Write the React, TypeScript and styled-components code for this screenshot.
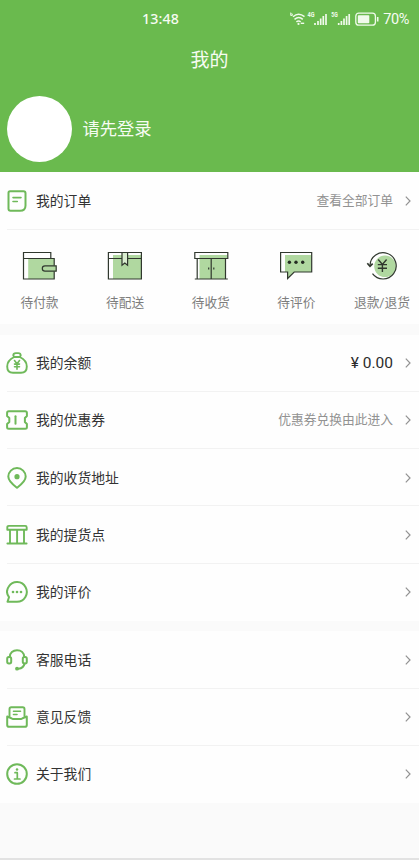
import React from 'react';
import styled, { createGlobalStyle } from 'styled-components';

const GlobalStyle = createGlobalStyle`
  * { box-sizing: border-box; }
  body {
    margin: 0;
    background: #fafafa;
    font-family: Roboto, "Noto Sans CJK SC", sans-serif;
    color: #333;
  }
`;

const GREEN = '#6aba4e';
const ICON_GREEN = '#6fb95a';

const Page = styled.div`
  display: flex;
  flex-direction: column;
  height: 860px;
  overflow: hidden;
  background: #fafafa;
`;

const Header = styled.header`
  flex: none;
  height: 172.4px;
  background: ${GREEN};
  color: #f6fcf2;
`;

const StatusBar = styled.div`
  display: flex;
  align-items: center;
  height: 38px;
  padding: 0 10px 0 142px;
`;

const Time = styled.span`
  margin-right: auto;
  font-family: "Noto Sans", sans-serif;
  font-size: 14.2px;
  font-weight: 500;
  line-height: 18px;
  letter-spacing: 0.15px;
`;

const Battery = styled.span`
  margin-left: 3px;
  padding-top: 1px;
  font-family: Roboto, sans-serif;
  font-size: 14.5px;
  line-height: 18px;
  letter-spacing: -0.4px;
`;

const Title = styled.h1`
  margin: 0;
  padding-top: 2px;
  height: 42px;
  line-height: 42px;
  text-align: center;
  font-size: 19px;
  font-weight: 400;
`;

const Profile = styled.div`
  display: flex;
  align-items: center;
  gap: 10.5px;
  margin-top: 16px;
  padding-left: 7px;
  font-size: 17.3px;
`;

const ProfileName = styled.span`
  padding-bottom: 3px;
`;

const Avatar = styled.div`
  width: 65px;
  height: 66px;
  border-radius: 50%;
  background: #fff;
`;

const Section = styled.section`
  flex: none;
  margin-bottom: 10.2px;
  background: #fefefe;
`;

const Row = styled.div<{ $divided: boolean }>`
  display: flex;
  align-items: center;
  height: 57.3px;
  margin-left: 7px;
  padding: 0.8px 8px 0 0;
  border-bottom: 1px solid ${p => (p.$divided ? '#f2f2f2' : 'transparent')};
`;

const RowIcon = styled.svg`
  flex: none;
  width: 22px;
  height: 22px;
  margin-left: -1px;
  fill: none;
  stroke: ${ICON_GREEN};
  stroke-width: 2;
  stroke-linecap: round;
  stroke-linejoin: round;
`;

const RowLabel = styled.span`
  margin-left: 8px;
  margin-right: auto;
  font-size: 13.8px;
  line-height: 20px;
`;

const RowValue = styled.span<{ $strong?: boolean }>`
  margin-right: 12px;
  font-size: ${p => (p.$strong ? '15.5px' : '12.75px')};
  color: ${p => (p.$strong ? '#2c2c2c' : '#929292')};
  line-height: 20px;
`;

const Chevron = styled.svg`
  flex: none;
  width: 6px;
  height: 10px;
  fill: none;
  stroke: #929292;
  stroke-width: 1.2;
`;

const Orders = styled.div`
  display: flex;
  justify-content: space-between;
  height: 94.7px;
  padding: 21px 9px 0 11.5px;
`;

const Order = styled.div`
  display: flex;
  flex-direction: column;
  align-items: center;
  width: 56px;
  gap: 12.2px;
  font-size: 12.7px;
  line-height: 19px;
  color: #7d7d7d;
  white-space: nowrap;
`;

const OrderIcon = styled.svg`
  width: 36px;
  height: 30px;
  fill: none;
  stroke: #30382e;
  stroke-width: 1.2;
`;

const Tint = styled.g`
  fill: #b0d8a0;
  stroke: none;
`;

const BottomLine = styled.div`
  height: 2px;
  margin-top: auto;
  background: #e2e2e2;
`;

const StatusIcons = () => (
  <svg width="91" height="20" viewBox="0 0 91 20" fill="none" stroke="#f0faeb">
    <g strokeWidth="1.5">
      <path d="M4 7.7Q9.5 2.9 15.5 7.7M5.5 10.4Q9.8 6.7 13.8 10.4M7.4 12.9Q9.6 11 11.7 12.9" />
    </g>
    <path d="M1.7 3.5v3h1.6v-1.6H1.7" strokeWidth="0.9" />
    <circle cx="9.5" cy="14.9" r="1.1" fill="#f0faeb" stroke="none" />
    <path d="M11.7 14.3h3.5" strokeWidth="1.4" />
    <g fill="#f0faeb" stroke="none" fontFamily="Roboto, sans-serif" fontSize="6.8" fontWeight="700">
      <text x="18.5" y="8.3" textLength="7" lengthAdjust="spacingAndGlyphs">4G</text>
      <text x="42.3" y="8.3" textLength="6.5" lengthAdjust="spacingAndGlyphs">5G</text>
    </g>
    <path d="M26 16v-2M29 16v-4M31.7 16v-6.5M34.3 16v-9M37 16v-11" strokeWidth="1.7" />
    <path d="M49.7 16v-2M52.4 16v-4M55 16v-6.5M57.6 16v-9M60.2 16v-11" strokeWidth="1.7" />
    <rect x="66.8" y="4.2" width="19.6" height="12" rx="3" strokeWidth="1.3" />
    <rect x="68.8" y="6.2" width="11.5" height="8" rx="0.8" fill="#f0faeb" stroke="none" />
    <path d="M88.7 8v4.5" strokeWidth="1.6" />
  </svg>
);

const orders = [
  {
    label: '待付款',
    art: (
      <>
        <Tint><path d="M6.2 7.5h26V28h-26z" /></Tint>
        <path d="M32.2 14.8V7.5H1.5V28h30.7v-7.8M1.5 7.5v-6h27.3v6" />
        <path d="M34.2 14.8H23a2.7 2.7 0 0 0 0 5.4h11.2z" fill="#b0d8a0" />
      </>
    ),
  },
  {
    label: '待配送',
    art: (
      <>
        <Tint><path d="M6 4h28v24H6z" /></Tint>
        <path d="M1.4 1.5h33V28h-33zM1.4 7.5h33" />
        <path d="M15 1.5v12.8l2.8-2.2 2.8 2.2V1.5z" fill="#d9edcf" />
      </>
    ),
  },
  {
    label: '待收货',
    art: (
      <>
        <Tint><path d="M6.5 4h28v3.5h-2V28h-26z" /></Tint>
        <path d="M1.8 1.5h33v6h-33zM4.2 7.5V28M32.5 7.5V28M18.2 7.5V28M1.8 28h33" />
        <path d="M15.7 16.5v2M20.8 16.5v2" />
      </>
    ),
  },
  {
    label: '待评价',
    art: (
      <>
        <Tint><path d="M7 4h26.5v17H16.2L9.3 27V21H7z" /></Tint>
        <path d="M2.6 1.5h31.1V21H16.2l-6.6 6.5V21h-7z" />
        <g fill="#242b22" stroke="none">
          <circle cx="11.4" cy="11.3" r="1.7" />
          <circle cx="18" cy="11.3" r="1.7" />
          <circle cx="24.7" cy="11.3" r="1.7" />
        </g>
      </>
    ),
  },
  {
    label: '退款/退货',
    art: (
      <>
        <Tint><circle cx="21" cy="15.3" r="10.8" /></Tint>
        <path d="M6 14.5A13.1 13.1 0 1 1 8.5 22.6" />
        <path d="M3.3 12.3l2.7 3 2.7-2.6" strokeWidth="1.7" />
        <path d="M14.2 8.5l4.2 5 4.2-5M18.4 13.5V21M13.8 13.6h9.2M13.8 17.2h9.2" strokeWidth="1.4" />
      </>
    ),
  },
];

const icons = {
  list: (
    <>
      <path d="M4 1.2h13.5a2 2 0 0 1 2 2V15.5q0 5.3-5.5 5.3H4.5a2 2 0 0 1-2-2V2.7q0-1.5 1.5-1.5z" />
      <path d="M7 7.6h8M7 11.5h4.3" strokeWidth="1.6" />
    </>
  ),
  purse: (
    <>
      <path d="M8.2 5L7.3 3.5q0-2.4 2.5-2.4h2.4q2.5 0 2.5 2.4L13.8 5zM8.2 5C4 7 1.2 10.5 1.2 14.5q0 6.3 5.8 6.3h8q5.8 0 5.8-6.3c0-4-2.8-7.5-7-9.5" strokeWidth="1.9" />
      <path d="M8.5 8.5l2.5 3.2 2.5-3.2M11 11.7v5.5M8.5 12.1h5M8.5 14.7h5" strokeWidth="1.6" />
    </>
  ),
  ticket: (
    <>
      <path d="M2.8 2.3h16.4q1.7 0 1.7 1.5V7l-2 2v4l2 2v3.2q0 1.5-1.7 1.5H2.8q-1.7 0-1.7-1.5V15l2.2-2V9l-2.2-2V3.8q0-1.5 1.7-1.5z" />
      <path d="M9.5 7.3v7.4" />
    </>
  ),
  pin: (
    <>
      <path d="M11 20.8C8.5 18.9 2.3 14.5 2.3 9.6a8.7 8.5 0 0 1 17.4 0C19.7 14.5 13.5 18.9 11 20.8z" />
      <circle cx="11" cy="9.7" r="2.6" fill={ICON_GREEN} stroke="none" />
    </>
  ),
  shop: (
    <path d="M2.8 1.9h16.4q1.5 0 1.5 1.5v2.4H1.3V3.4q0-1.5 1.5-1.5zM4 6v13.5M11.1 6v13.5M18 6v13.5M1.4 19.5h19.2" strokeWidth="1.9" />
  ),
  chat: (
    <>
      <path d="M1.5 20.7l1.5-4.5C.7 13 .5 8.7 2.8 5.5A9.8 9.8 0 1 1 11 20.7z" />
      <g fill={ICON_GREEN} stroke="none">
        <circle cx="7" cy="11" r="1.3" />
        <circle cx="11" cy="11" r="1.3" />
        <circle cx="15" cy="11" r="1.3" />
      </g>
    </>
  ),
  headset: (
    <>
      <rect x="1.2" y="8" width="4" height="6.5" rx="1.7" />
      <rect x="16.8" y="8" width="4" height="6.5" rx="1.7" />
      <path d="M3.8 8C3.8 3.8 7 1.2 11 1.2S18.2 3.8 18.2 8M18.5 14.7c-.6 3-2.3 4.500-6 5" />
      <circle cx="11" cy="19.7" r="1.9" fill={ICON_GREEN} stroke="none" />
    </>
  ),
  mail: (
    <>
      <path d="M3.5 10V2.9q0-1.7 1.7-1.7h11.6q1.7 0 1.7 1.7V10" strokeWidth="1.9" />
      <path d="M7.5 5.3h7M7.5 8.5h3.5" strokeWidth="1.6" />
      <path d="M1.2 10.5q3.5 1.2 5.5 2.5h8.6q2-1.3 5.500-2.500v8.4q0 1.8-1.7 1.8H2.9q-1.7 0-1.7-1.8z" />
    </>
  ),
  info: (
    <>
      <circle cx="11" cy="11" r="9.8" />
      <path d="M9 9.7h2.3V16M8.5 16H14" strokeWidth="1.7" />
      <circle cx="11" cy="6.5" r="1.25" fill={ICON_GREEN} stroke="none" />
    </>
  ),
};

interface ItemProps {
  icon: keyof typeof icons;
  label: string;
  value?: string;
  strong?: boolean;
  last?: boolean;
}

const Item = ({ icon, label, value, strong, last }: ItemProps) => (
  <Row $divided={!last}>
    <RowIcon viewBox="0 0 22 22">{icons[icon]}</RowIcon>
    <RowLabel>{label}</RowLabel>
    {value && <RowValue $strong={strong}>{value}</RowValue>}
    <Chevron viewBox="0 0 6 10"><path d="M.8.7L5 5 .8 9.3" /></Chevron>
  </Row>
);

export default function App() {
  return (
    <>
      <GlobalStyle />
      <Page>
        <Header>
          <StatusBar>
            <Time>13:48</Time>
            <StatusIcons />
            <Battery>70%</Battery>
          </StatusBar>
          <Title>我的</Title>
          <Profile>
            <Avatar />
            <ProfileName>请先登录</ProfileName>
          </Profile>
        </Header>
        <Section>
          <Item icon="list" label="我的订单" value="查看全部订单" />
          <Orders>
            {orders.map(o => (
              <Order key={o.label}>
                <OrderIcon viewBox="0 0 36 30">{o.art}</OrderIcon>
                {o.label}
              </Order>
            ))}
          </Orders>
        </Section>
        <Section>
          <Item icon="purse" label="我的余额" value="¥ 0.00" strong />
          <Item icon="ticket" label="我的优惠券" value="优惠券兑换由此进入" />
          <Item icon="pin" label="我的收货地址" />
          <Item icon="shop" label="我的提货点" />
          <Item icon="chat" label="我的评价" last />
        </Section>
        <Section>
          <Item icon="headset" label="客服电话" />
          <Item icon="mail" label="意见反馈" />
          <Item icon="info" label="关于我们" last />
        </Section>
        <BottomLine />
      </Page>
    </>
  );
}
